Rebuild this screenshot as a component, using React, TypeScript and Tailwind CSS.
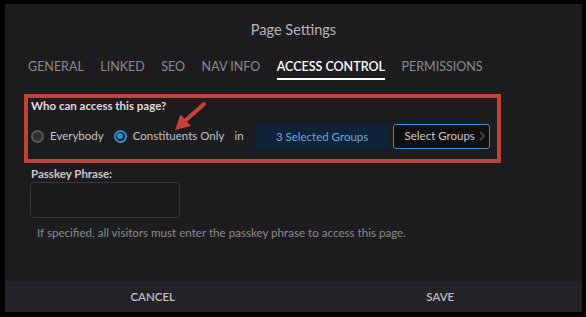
import React from "react";

const tabs = ["GENERAL", "LINKED", "SEO", "NAV INFO", "ACCESS CONTROL", "PERMISSIONS"];

export default function App() {
  return (
    <div
      className="w-[586px] h-[317px] bg-black pt-[4px] pl-[5px] pr-[4px] pb-[5px]"
      style={{ fontFamily: "Lato, 'Open Sans', sans-serif" }}
    >
      <div className="relative flex flex-col h-full bg-[#1c1c1e]">
        <div className="h-[52px] flex items-center justify-center text-[14.5px] text-[#b5b5b8]">
          Page Settings
        </div>
        <div className="flex pl-[23px] gap-[16.5px] text-[12.5px]">
          {tabs.map((t) => {
            const active = t === "ACCESS CONTROL";
            return (
              <div key={t} className="flex flex-col">
                <span
                  className={
                    "leading-[22px] whitespace-nowrap " +
                    (active ? "text-white font-semibold" : "text-[#8a8a8e]")
                  }
                >
                  {t}
                </span>
                <div className={"h-[2px] " + (active ? "bg-white" : "bg-transparent")} />
              </div>
            );
          })}
        </div>
        <div className="mt-[14px] ml-[19px] w-[477px] h-[69px] border-4 border-[#c0403a]">
          <div className="pl-[3px] text-[11.5px] leading-[13px] font-bold text-[#dedede] mt-[1px]">
            Who can access this page?
          </div>
          <div className="mt-[11px] flex items-center h-[26px] pl-[3px] text-[11.5px] text-[#c4c4c6]">
            <span className="w-[13px] h-[13px] rounded-full bg-[#2f2f31] border-2 border-[#58585b]" />
            <span className="ml-[6px]">Everybody</span>
            <span className="ml-[10px] w-[13px] h-[13px] rounded-full border-2 border-[#2e8fd4] p-[1.5px] flex">
              <span className="flex-1 rounded-full bg-[#2e8fd4]" />
            </span>
            <span className="ml-[6px]">Constituents Only</span>
            <span className="ml-[10px]">in</span>
            <div className="ml-[12px] w-[133px] h-[25px] mt-[1px] bg-[#0e2338] flex items-center justify-center text-[11.5px] text-[#6aa8dc]">
              3 Selected Groups
            </div>
            <div className="ml-[4px] w-[97px] h-[25px] rounded-[3px] border border-[#3a8fd0] bg-[#0f0f10] flex items-center pl-[11px] text-[11.5px] text-[#c8c8c8]">
              <span>Select Groups</span>
              <svg width="6" height="10" viewBox="0 0 6 10" className="ml-[4px]">
                <path d="M1 1 L5 5 L1 9" stroke="#4a4a4d" strokeWidth="1.6" fill="none" />
              </svg>
            </div>
          </div>
        </div>
        <div className="mt-[4px] ml-[26px] text-[11.5px] leading-[14px] font-bold text-[#c8c8ca]">
          Passkey Phrase:
        </div>
        <div className="mt-[1px] ml-[25px] w-[150px] h-[36px] rounded-[4px] border border-[#38383b] bg-[#1a1a1c]" />
        <div className="mt-[8px] ml-[32px] text-[11.6px] leading-[14px] text-[#8a8a8d]">
          If specified, all visitors must enter the passkey phrase to access this page.
        </div>
        <div className="mt-auto h-[31px] bg-[#232327] flex text-[11.5px] font-semibold text-[#bdbdc0]">
          <div className="flex-1 flex items-center justify-center pl-[6px]">CANCEL</div>
          <div className="flex-1 flex items-center justify-center pl-[4px]">SAVE</div>
        </div>
        <svg
          className="absolute left-0 top-0 pointer-events-none"
          width="577"
          height="308"
          viewBox="5 4 577 308"
        >
          <line x1="204" y1="104" x2="186" y2="120" stroke="#c9403a" strokeWidth="4" strokeLinecap="round" />
          <polygon points="175,130 180.5,114.5 191,126" fill="#c9403a" />
        </svg>
      </div>
    </div>
  );
}
